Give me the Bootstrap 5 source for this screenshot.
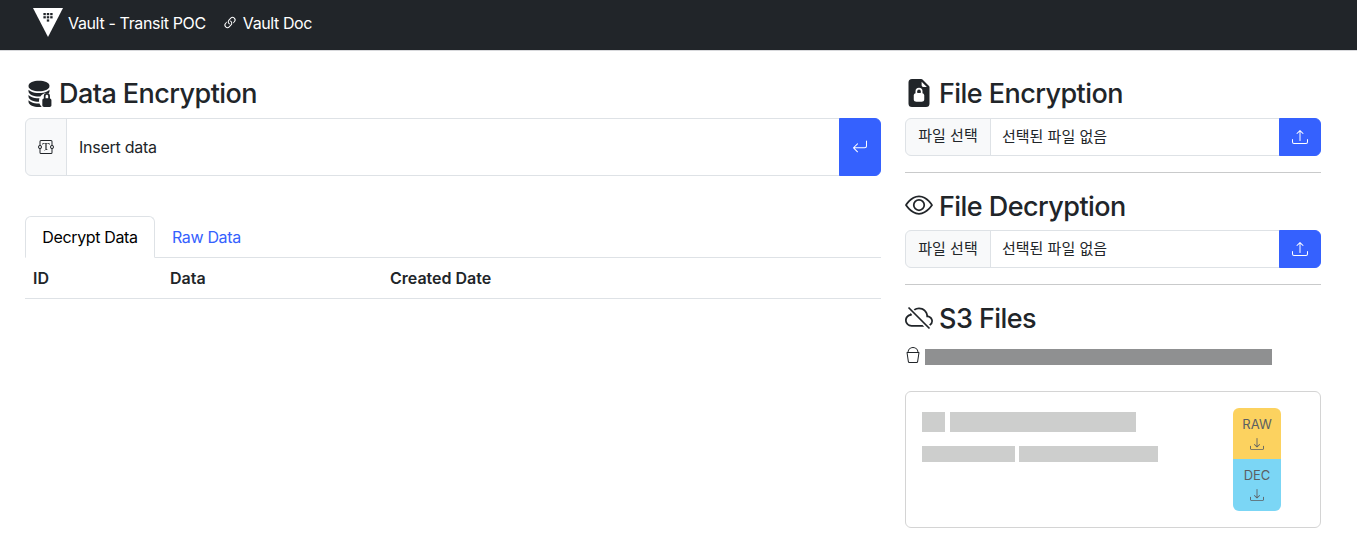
<!DOCTYPE html>
<html lang="ko">
<head>
<meta charset="utf-8">
<title>Vault - Transit POC</title>
<link href="https://cdn.jsdelivr.net/npm/bootstrap@5.3.0/dist/css/bootstrap.min.css" rel="stylesheet">
<style>
body{font-family:Inter,"Noto Sans CJK KR",sans-serif;color:#212529;overflow:hidden}
.top-bar{height:51px;background:#212529;border-bottom:1px solid #d8d9dc;padding:0 0 4px 33px}
.top-bar .navbar-brand{font-size:16px;letter-spacing:-.35px;color:#fff;margin-right:16px;padding:0;display:flex;align-items:center;gap:5px}
.top-bar .nav-link{font-size:16px;letter-spacing:-.4px;color:#fff;padding:0;display:flex;align-items:center;gap:5px}
.top-logo{width:30px;height:30px;display:block}
.link-ico{width:16px;height:16px;fill:#fff}
.page-wrap{width:1320px;margin-left:13px;padding:25px 12px 0}
.sec-title{font-size:27px;letter-spacing:-.56px;line-height:33.6px;font-weight:500;margin-bottom:8px;display:flex;align-items:center;gap:6px;white-space:nowrap}
.sec-title svg{width:28px;height:28px;flex:none;fill:currentColor}
.title-text{padding-top:2px;line-height:31.6px}
.left-col{width:856px;flex:none}
.right-col{width:416px;flex:none;margin-left:24px}
.data-group{margin-bottom:40px}
.data-group .input-group-text{width:42px;padding:0 12px;border-color:#dee2e6}
.data-group .form-control{padding:16px 12px;height:58px;font-size:16px;letter-spacing:-.27px}
.data-group .form-control::placeholder{color:#212529;opacity:1}
.data-group svg,.blue-btn svg{width:16px;height:16px;fill:currentColor}
.blue-btn{--bs-btn-bg:#3561fe;--bs-btn-border-color:#3561fe;--bs-btn-color:#fff;--bs-btn-hover-bg:#3561fe;--bs-btn-hover-color:#fff;--bs-btn-hover-border-color:#3561fe;width:42px;padding:0 12px;display:flex;align-items:center;justify-content:center;background:#3561fe;border-color:#3561fe;color:#fff}
.file-group{height:38px}
.file-group .input-group-text{font-size:15px;color:#212529;width:86px;justify-content:center;padding:0}
.file-group .form-control{font-size:15px;color:#212529;padding:0 12px 0 11px;line-height:36px}
.soft-rule{margin:16px 0;border:0;border-top:1px solid #c9cacb;opacity:1}
.tab-strip .nav-link{color:#3561fe;padding:8px 16px;font-size:16px;letter-spacing:-.35px;line-height:24px;border-radius:6px 6px 0 0}
.tab-strip .nav-link.active{color:#000}
.tab-strip .nav-link.first-tab{width:130px;text-align:center;padding:8px 0}
.head-table{table-layout:fixed;margin:0;font-size:16px}
.head-table th{font-weight:600;padding:8px;line-height:24px}
.w-id{width:137px}.w-data{width:220px}
.bucket-row{height:24px;margin-bottom:24px;display:flex;align-items:center;gap:4px}
.bucket-row svg{width:16px;height:16px;fill:#212529;flex:none}
.mask-dark{width:347px;height:16px;background:#8f9091;margin-top:4px}
.file-box{height:137px;border:1px solid #d4d4d4;border-radius:6px;padding:16px;display:flex;justify-content:space-between}
.mask-line{display:flex}
.mask-light{background:#cdcecd;display:block}
.line-a{gap:5px;height:20px;margin:4px 0 14px}
.line-b{gap:4px;height:16px}
.dl-stack{margin-right:23px;width:48px;height:103px}
.dl-stack .btn{width:48px;padding:4px 0;font-size:13px;line-height:24px;color:#5b5f62;border:0;flex:1 1 50%;display:flex;flex-direction:column;align-items:center;opacity:1}
.dl-stack svg{width:14px;height:14px;fill:currentColor;margin-top:1px}
.dl-raw{background:#fcd25f}
.dl-dec{background:#7bd6f5}
.dl-raw:hover{background:#fcd25f}.dl-dec:hover{background:#7bd6f5}
</style>
</head>
<body>
<nav class="navbar navbar-expand top-bar justify-content-start">
  <a class="navbar-brand" href="#">
    <svg class="top-logo" viewBox="0 0 30 30" aria-hidden="true"><path fill="#fff" d="M0 0h30L15 29z"/><g fill="#212529"><rect x="10.4" y="5" width="2.4" height="2.2"/><rect x="13.8" y="5" width="2.4" height="2.2"/><rect x="17.2" y="5" width="2.4" height="2.2"/><rect x="10.4" y="8.2" width="2.4" height="2.2"/><rect x="13.8" y="8.2" width="2.4" height="2.2"/><rect x="17.2" y="8.2" width="2.4" height="2.2"/><rect x="13.8" y="11.4" width="2.4" height="2.2"/></g></svg>
    Vault - Transit POC
  </a>
  <a class="nav-link" href="#">
    <svg class="link-ico" viewBox="0 0 16 16"><path d="M4.715 6.542 3.343 7.914a3 3 0 1 0 4.243 4.243l1.828-1.829A3 3 0 0 0 8.586 5.5L8 6.086a1.002 1.002 0 0 0-.154.199 2 2 0 0 1 .861 3.337L6.88 11.45a2 2 0 1 1-2.83-2.83l.793-.792a4.018 4.018 0 0 1-.128-1.287z"/><path d="M6.586 4.672A3 3 0 0 0 7.414 9.5l.775-.776a2 2 0 0 1-.896-3.346L9.12 3.55a2 2 0 1 1 2.83 2.83l-.793.792c.112.42.155.855.128 1.287l1.372-1.372a3 3 0 1 0-4.243-4.243L6.586 4.672z"/></svg>
    Vault Doc
  </a>
</nav>
<div class="page-wrap d-flex">
  <div class="left-col">
    <h3 class="sec-title">
      <svg viewBox="0 0 16 16"><path d="M8 1c-1.573 0-3.022.289-4.096.777C2.875 2.245 2 2.993 2 4s.875 1.755 1.904 2.223C4.978 6.711 6.427 7 8 7s3.022-.289 4.096-.777C13.125 5.755 14 5.007 14 4s-.875-1.755-1.904-2.223C11.022 1.289 9.573 1 8 1Z"/><path d="M2 7v-.839c.457.432 1.004.751 1.49.972C4.722 7.693 6.318 8 8 8s3.278-.307 4.51-.867c.486-.22 1.033-.54 1.49-.972V7c0 .424-.155.802-.411 1.133a4.51 4.51 0 0 0-4.815 1.843A12.31 12.31 0 0 1 8 10c-1.573 0-3.022-.289-4.096-.777C2.875 8.755 2 8.007 2 7Zm6.257 3.998L8 11c-1.682 0-3.278-.307-4.51-.867-.486-.22-1.033-.54-1.49-.972V10c0 1.007.875 1.755 1.904 2.223C4.978 12.711 6.427 13 8 13h.027a4.552 4.552 0 0 1 .23-2.002Zm-.002 3L8 14c-1.682 0-3.278-.307-4.51-.867-.486-.22-1.033-.54-1.49-.972V13c0 1.007.875 1.755 1.904 2.223C4.978 15.711 6.427 16 8 16c.536 0 1.058-.034 1.555-.097a4.507 4.507 0 0 1-1.3-1.905Z"/><path d="M12.5 8A1.75 1.75 0 0 0 10.75 9.75V11.1c-.5.1-.85.5-.85 1V15c0 .55.45 1 1 1h3.2c.55 0 1-.45 1-1v-2.9c0-.5-.35-.9-.85-1V9.75A1.75 1.75 0 0 0 12.5 8Zm0 1c.41 0 .75.34.75.75V11h-1.5V9.75c0-.41.34-.75.75-.75Z"/></svg>
      <span class="title-text">Data Encryption</span>
    </h3>
    <div class="input-group data-group">
      <span class="input-group-text"><svg viewBox="0 0 16 16"><path d="M1.5 2.5A1.5 1.5 0 0 1 3 1h10a1.5 1.5 0 0 1 1.5 1.5v3.563a2 2 0 0 1 0 3.874V13.5A1.5 1.5 0 0 1 13 15H3a1.5 1.5 0 0 1-1.5-1.5V9.937a2 2 0 0 1 0-3.874V2.5zm1 3.563a2 2 0 0 1 0 3.874V13.5a.5.5 0 0 0 .5.5h10a.5.5 0 0 0 .5-.5V9.937a2 2 0 0 1 0-3.874V2.5A.5.5 0 0 0 13 2H3a.5.5 0 0 0-.5.5v3.563zM2 7a1 1 0 1 0 0 2 1 1 0 0 0 0-2zm12 0a1 1 0 1 0 0 2 1 1 0 0 0 0-2z"/><path d="M11.434 4H4.566L4.5 5.994h.386c.21-1.252.612-1.446 2.173-1.495l.343-.011v6.343c0 .537-.116.665-1.049.748V11h3.294v-.421c-.938-.083-1.054-.21-1.054-.748V4.488l.348.01c1.56.05 1.963.244 2.173 1.496h.386L11.434 4z"/></svg></span>
      <input class="form-control" type="text" placeholder="Insert data">
      <button class="btn blue-btn" type="button"><svg viewBox="0 0 16 16"><path fill-rule="evenodd" d="M14.5 1.5a.5.5 0 0 1 .5.5v4.8a2.5 2.5 0 0 1-2.5 2.5H2.707l3.147 3.146a.5.5 0 0 1-.708.708l-4-4a.5.5 0 0 1 0-.708l4-4a.5.5 0 1 1 .708.708L2.707 8.3H12.5A1.5 1.5 0 0 0 14 6.8V2a.5.5 0 0 1 .5-.5z"/></svg></button>
    </div>
    <ul class="nav nav-tabs tab-strip">
      <li class="nav-item"><a class="nav-link first-tab active" href="#">Decrypt Data</a></li>
      <li class="nav-item"><a class="nav-link" href="#">Raw Data</a></li>
    </ul>
    <table class="table head-table">
      <thead><tr><th class="w-id">ID</th><th class="w-data">Data</th><th>Created Date</th></tr></thead>
    </table>
  </div>
  <div class="right-col">
    <h3 class="sec-title">
      <svg viewBox="0 0 16 16"><path d="M7 7a1 1 0 0 1 2 0v1H7V7z"/><path d="M9.293 0H4a2 2 0 0 0-2 2v12a2 2 0 0 0 2 2h8a2 2 0 0 0 2-2V4.707A1 1 0 0 0 13.707 4L10 .293A1 1 0 0 0 9.293 0zM9.5 3.5v-2l3 3h-2a1 1 0 0 1-1-1zM10 7v1.076c.54.166 1 .597 1 1.224v2.4c0 .816-.781 1.3-1.5 1.3h-3c-.719 0-1.5-.484-1.5-1.3V9.3c0-.627.46-1.058 1-1.224V7a2 2 0 1 1 4 0z"/></svg>
      <span class="title-text">File Encryption</span>
    </h3>
    <div class="input-group file-group">
      <span class="input-group-text">파일 선택</span>
      <span class="form-control">선택된 파일 없음</span>
      <button class="btn blue-btn" type="button"><svg viewBox="0 0 16 16"><path d="M.5 9.9a.5.5 0 0 1 .5.5v2.5a1 1 0 0 0 1 1h12a1 1 0 0 0 1-1v-2.5a.5.5 0 0 1 1 0v2.5a2 2 0 0 1-2 2H2a2 2 0 0 1-2-2v-2.5a.5.5 0 0 1 .5-.5z"/><path d="M7.646 1.146a.5.5 0 0 1 .708 0l3 3a.5.5 0 0 1-.708.708L8.5 2.707V11.5a.5.5 0 0 1-1 0V2.707L5.354 4.854a.5.5 0 1 1-.708-.708l3-3z"/></svg></button>
    </div>
    <hr class="soft-rule">
    <h3 class="sec-title">
      <svg viewBox="0 0 16 16"><path d="M16 8s-3-5.5-8-5.5S0 8 0 8s3 5.5 8 5.5S16 8 16 8zM1.173 8a13.133 13.133 0 0 1 1.66-2.043C4.12 4.668 5.88 3.5 8 3.5c2.12 0 3.879 1.168 5.168 2.457A13.133 13.133 0 0 1 14.828 8c-.058.087-.122.183-.195.288-.335.48-.83 1.12-1.465 1.755C11.879 11.332 10.119 12.5 8 12.5c-2.12 0-3.879-1.168-5.168-2.457A13.134 13.134 0 0 1 1.172 8z"/><path d="M8 5.5a2.5 2.5 0 1 0 0 5 2.5 2.5 0 0 0 0-5zM4.5 8a3.5 3.5 0 1 1 7 0 3.5 3.5 0 0 1-7 0z"/></svg>
      <span class="title-text">File Decryption</span>
    </h3>
    <div class="input-group file-group">
      <span class="input-group-text">파일 선택</span>
      <span class="form-control">선택된 파일 없음</span>
      <button class="btn blue-btn" type="button"><svg viewBox="0 0 16 16"><path d="M.5 9.9a.5.5 0 0 1 .5.5v2.5a1 1 0 0 0 1 1h12a1 1 0 0 0 1-1v-2.5a.5.5 0 0 1 1 0v2.5a2 2 0 0 1-2 2H2a2 2 0 0 1-2-2v-2.5a.5.5 0 0 1 .5-.5z"/><path d="M7.646 1.146a.5.5 0 0 1 .708 0l3 3a.5.5 0 0 1-.708.708L8.5 2.707V11.5a.5.5 0 0 1-1 0V2.707L5.354 4.854a.5.5 0 1 1-.708-.708l3-3z"/></svg></button>
    </div>
    <hr class="soft-rule">
    <h3 class="sec-title">
      <svg viewBox="0 0 16 16"><path fill-rule="evenodd" d="M3.112 5.112a3.125 3.125 0 0 0-.17.613C1.266 6.095 0 7.555 0 9.318 0 11.366 1.708 13 3.781 13H11l-1-1H3.781C2.231 12 1 10.785 1 9.318c0-1.365 1.064-2.513 2.46-2.666l.446-.05v-.447c0-.075.006-.152.018-.231l-.812-.812zm2.55-1.45-.725-.725A5.512 5.512 0 0 1 8 2c2.69 0 4.923 2 5.166 4.579C14.758 6.804 16 8.137 16 9.773a3.2 3.2 0 0 1-1.516 2.711l-.733-.733C14.498 11.378 15 10.626 15 9.773c0-1.216-1.02-2.228-2.313-2.228h-.5v-.5C12.188 4.825 10.328 3 8 3c-.875 0-1.678.26-2.339.661z"/><path d="m13.646 14.354-12-12 .708-.708 12 12-.707.707z"/></svg>
      <span class="title-text">S3 Files</span>
    </h3>
    <div class="bucket-row">
      <svg viewBox="0 0 16 16"><path d="M2.522 5H2a.5.5 0 0 0-.494.574l1.372 9.149A1.5 1.5 0 0 0 4.36 16h7.278a1.5 1.5 0 0 0 1.483-1.277l1.373-9.149A.5.5 0 0 0 14 5h-.522A5.5 5.5 0 0 0 2.522 5zm1.005 0a4.5 4.5 0 0 1 8.945 0H3.527zm9.892 1-1.286 8.574a.5.5 0 0 1-.494.426H4.36a.5.5 0 0 1-.494-.426L2.58 6h10.838z"/></svg>
      <span class="mask-dark"></span>
    </div>
    <div class="file-box">
      <div>
        <div class="mask-line line-a"><span class="mask-light" data-w="23"></span><span class="mask-light" data-w="186"></span></div>
        <div class="mask-line line-b"><span class="mask-light" data-w="93"></span><span class="mask-light" data-w="139"></span></div>
      </div>
      <div class="btn-group-vertical dl-stack">
        <button class="btn dl-raw" type="button">RAW<svg viewBox="0 0 16 16"><path d="M.5 9.9a.5.5 0 0 1 .5.5v2.5a1 1 0 0 0 1 1h12a1 1 0 0 0 1-1v-2.5a.5.5 0 0 1 1 0v2.5a2 2 0 0 1-2 2H2a2 2 0 0 1-2-2v-2.5a.5.5 0 0 1 .5-.5z"/><path d="M7.646 11.854a.5.5 0 0 0 .708 0l3-3a.5.5 0 0 0-.708-.708L8.5 10.293V1.5a.5.5 0 0 0-1 0v8.793L5.354 8.146a.5.5 0 1 0-.708.708l3 3z"/></svg></button>
        <button class="btn dl-dec" type="button">DEC<svg viewBox="0 0 16 16"><path d="M.5 9.9a.5.5 0 0 1 .5.5v2.5a1 1 0 0 0 1 1h12a1 1 0 0 0 1-1v-2.5a.5.5 0 0 1 1 0v2.5a2 2 0 0 1-2 2H2a2 2 0 0 1-2-2v-2.5a.5.5 0 0 1 .5-.5z"/><path d="M7.646 11.854a.5.5 0 0 0 .708 0l3-3a.5.5 0 0 0-.708-.708L8.5 10.293V1.5a.5.5 0 0 0-1 0v8.793L5.354 8.146a.5.5 0 1 0-.708.708l3 3z"/></svg></button>
      </div>
    </div>
  </div>
</div>
<script src="https://cdn.jsdelivr.net/npm/bootstrap@5.3.0/dist/js/bootstrap.bundle.min.js"></script>
<script>
document.querySelectorAll('.mask-light').forEach(function(el){el.style.width=el.dataset.w+'px';});
</script>
</body>
</html>
